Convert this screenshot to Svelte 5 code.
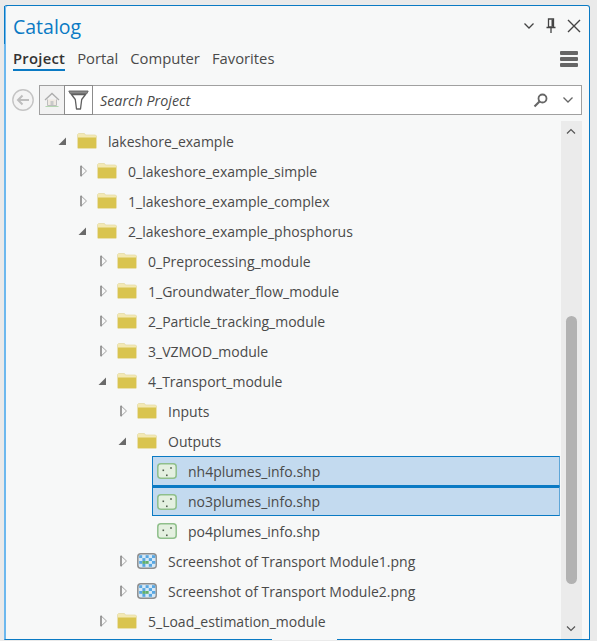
<script lang="ts">
type Row = { label: string; depth: number; kind: "folder" | "shape" | "raster"; arrow?: "open" | "closed"; selected?: boolean };

const rows: Row[] = [
  { label: "lakeshore_example", depth: 0, kind: "folder", arrow: "open" },
  { label: "0_lakeshore_example_simple", depth: 1, kind: "folder", arrow: "closed" },
  { label: "1_lakeshore_example_complex", depth: 1, kind: "folder", arrow: "closed" },
  { label: "2_lakeshore_example_phosphorus", depth: 1, kind: "folder", arrow: "open" },
  { label: "0_Preprocessing_module", depth: 2, kind: "folder", arrow: "closed" },
  { label: "1_Groundwater_flow_module", depth: 2, kind: "folder", arrow: "closed" },
  { label: "2_Particle_tracking_module", depth: 2, kind: "folder", arrow: "closed" },
  { label: "3_VZMOD_module", depth: 2, kind: "folder", arrow: "closed" },
  { label: "4_Transport_module", depth: 2, kind: "folder", arrow: "open" },
  { label: "Inputs", depth: 3, kind: "folder", arrow: "closed" },
  { label: "Outputs", depth: 3, kind: "folder", arrow: "open" },
  { label: "nh4plumes_info.shp", depth: 4, kind: "shape", selected: true },
  { label: "no3plumes_info.shp", depth: 4, kind: "shape", selected: true },
  { label: "po4plumes_info.shp", depth: 4, kind: "shape" },
  { label: "Screenshot of Transport Module1.png", depth: 3, kind: "raster", arrow: "closed" },
  { label: "Screenshot of Transport Module2.png", depth: 3, kind: "raster", arrow: "closed" },
  { label: "5_Load_estimation_module", depth: 2, kind: "folder", arrow: "closed" },
];

const tabs = ["Project", "Portal", "Computer", "Favorites"];

// 5x4 checker for the raster thumbnail
const rasterCells = Array.from({ length: 20 }, (_, i) => ({
  x: 2.2 + (i % 5) * 3.2,
  y: 2.2 + Math.floor(i / 5) * 2.9,
  fill: i === 11 || i === 12 ? "#62b06c" : (i % 5 + Math.floor(i / 5)) % 2 ? "#d6e8f6" : "#58a7e2",
}));
</script>

<div class="page">
  <div class="panel">
    <div class="titlebar">
      <span class="title">Catalog</span>
      <div class="window-btns">
        <svg width="12" height="8" viewBox="0 0 12 8"><path d="M1.5 1.5 6 6l4.500-4.500" fill="none" stroke="#444" stroke-width="1.300" /></svg>
        <svg width="12" height="16" viewBox="0 0 12 16"><path d="M3.500 1h5v8h-5zM1.500 9.500h9M6 10v5" fill="none" stroke="#444" stroke-width="1.300" /><path d="M6.500 1.500h2v7h-2z" fill="#444" /></svg>
        <svg width="14" height="14" viewBox="0 0 14 14"><path d="M1 1l12 12M13 1 1 13" fill="none" stroke="#444" stroke-width="1.400" /></svg>
      </div>
    </div>

    <div class="tabbar">
      <div class="tabs">
        {#each tabs as tab, i}
          <span class="tab" class:active={i === 0}>{tab}</span>
        {/each}
      </div>
      <div class="menu"><i></i><i></i><i></i></div>
    </div>

    <div class="searchbar">
      <svg class="back" width="24" height="24" viewBox="0 0 24 24">
        <circle cx="12" cy="12" r="10.200" fill="#f4f4f4" stroke="#c4c4c4" stroke-width="1.400" />
        <path d="M18 12H7M11.500 7.500 7 12l4.500 4.500" fill="none" stroke="#bdbdbd" stroke-width="2" />
      </svg>
      <div class="search">
        <div class="home">
          <svg width="16" height="16" viewBox="0 0 16 16">
            <path d="M1 8 8 1.500 15 8" fill="none" stroke="#adadad" stroke-width="1.300" />
            <path d="M3.500 7.500V13.500h9V7.500" fill="#efe9e2" stroke="#bdbdbd" />
            <path d="M6.500 9h3v4h-3z" fill="#c9c9c9" />
            <path d="M1.500 14.500h13" stroke="#b5d6b1" />
          </svg>
        </div>
        <div class="filter">
          <svg width="21" height="20" viewBox="0 0 21 20">
            <path d="M.8 1h19.400l-1.600 3H2.400z" fill="#8a8a8a" stroke="#5f5f5f" stroke-width=".9" />
            <path d="M3.500 4.500h14l-3.800 5L12.500 19h-4L7.300 9.500z" fill="#fff" stroke="#5f5f5f" stroke-width="1.300" stroke-linejoin="round" />
          </svg>
        </div>
        <span class="placeholder">Search Project</span>
        <svg class="glass" width="15" height="15" viewBox="0 0 15 15">
          <circle cx="9.500" cy="5.500" r="4" fill="none" stroke="#666" stroke-width="1.800" />
          <path d="M6.500 8.500 1.500 13.500" stroke="#666" stroke-width="2.200" />
        </svg>
        <svg class="drop" width="12" height="8" viewBox="0 0 12 8"><path d="M1.500 1.500 6 6l4.500-4.500" fill="none" stroke="#666" stroke-width="1.300" /></svg>
      </div>
    </div>

    <div class="content">
      <div class="tree">
        {#each rows as row}
          <div class="row" class:selected={row.selected} style="padding-left: {row.depth * 20 + 52}px">
            <span class="arrow">
              {#if row.arrow === "open"}
                <svg width="10" height="10" viewBox="0 0 10 10"><path d="M9 1.500V9H1.500z" fill="#6a6a6a" /></svg>
              {:else if row.arrow === "closed"}
                <svg width="12" height="12" viewBox="0 0 12 12"><path d="M4 .8 9.500 6 4 11.200z" fill="#f8f9f9" stroke="#a2a2a2" stroke-width="1" /><path d="M4 .8V11.200" stroke="#7c7c7c" stroke-width="1.200" /></svg>
              {/if}
            </span>
            {#if row.kind === "folder"}
              <svg class="icon" width="20" height="16" viewBox="0 0 20 16">
                <path d="M.5 3V1.500l1-1h6l1 1.500H18.500l1 1V15l-.5.500H1L.5 15z" fill="#f3e9b5" stroke="#e6dca6" stroke-width=".8" />
                <path d="M1 4.500h18V15H1z" fill="#d9c44f" />
              </svg>
            {:else if row.kind === "shape"}
              <svg class="icon" width="20" height="16" viewBox="0 0 20 16">
                <rect x=".8" y=".8" width="18.400" height="14.400" rx="3" fill="#e4f0e0" stroke="#8fbf8b" stroke-width="1.500" />
                <rect x="5.500" y="6.500" width="1.600" height="1.600" fill="#4f5e4d" />
                <rect x="13.200" y="4.200" width="1.600" height="1.600" fill="#4f5e4d" />
                <rect x="9" y="11.500" width="1.600" height="1.600" fill="#4f5e4d" />
              </svg>
            {:else}
              <svg class="icon" width="20" height="16" viewBox="0 0 20 16">
                <rect x=".8" y=".8" width="18.400" height="14.400" rx="3" fill="#d6e8f6" stroke="#8e8e8e" stroke-width="1.500" />
                {#each rasterCells as c}
                  <rect x={c.x} y={c.y} width="3.200" height="2.900" fill={c.fill} />
                {/each}
              </svg>
            {/if}
            <span class="label">{row.label}</span>
          </div>
        {/each}
      </div>
      <div class="scrollbar">
        <svg class="up" width="10" height="7" viewBox="0 0 10 7"><path d="M1 5.500 5 1.500l4 4" fill="none" stroke="#555" stroke-width="1.200" /></svg>
        <div class="thumb"></div>
        <svg class="down" width="10" height="7" viewBox="0 0 10 7"><path d="M1 1.500 5 5.500l4-4" fill="none" stroke="#555" stroke-width="1.200" /></svg>
      </div>
    </div>
  </div>
</div>

<style>
  :global(body) {
    margin: 0;
    background: #eaeaea;
    font-family: "Open Sans", "Noto Sans", sans-serif;
  }

  .page {
    width: 597px;
    height: 641px;
    box-sizing: border-box;
    padding: 5px 7px 1px 4px;
    overflow: hidden;
  }

  .panel {
    position: relative;
    height: 100%;
    box-sizing: border-box;
    display: flex;
    flex-direction: column;
    background: #f7f8f8;
    border: 1px solid #0a7ac4;
    border-left-color: #6db8ee;
    box-shadow: inset 1px 0 0 #6db8ee;
    border-radius: 3px 3px 0 0;
  }

  .panel::before {
    content: "";
    position: absolute;
    left: -1px;
    top: 0;
    width: 1px;
    height: 38px;
    background: #0a7ac4;
  }

  /* gap in the bottom border */
  .panel::after {
    content: "";
    position: absolute;
    left: 267px;
    bottom: -1px;
    width: 65px;
    height: 1px;
    background: #f7f8f8;
  }

  .titlebar {
    height: 36px;
    flex: none;
    display: flex;
    align-items: center;
    justify-content: space-between;
    padding: 4px 9px 0 8px;
    box-sizing: border-box;
  }

  .title {
    font-size: 19.500px;
    margin-top: 1px;
    color: #0a7ac4;
  }

  .window-btns {
    display: flex;
    align-items: center;
    gap: 10px;
    margin-right: -1px;
  }

  .tabbar {
    height: 43px;
    flex: none;
    display: flex;
    justify-content: space-between;
    align-items: flex-start;
    padding: 5px 10px 0 8px;
    box-sizing: border-box;
  }

  .tabs {
    display: flex;
    gap: 12px;
  }

  .tab {
    font-size: 14.800px;
    line-height: 22px;
    height: 22px;
    color: #4a4a4a;
  }

  .tab.active {
    color: #333;
    font-weight: 600;
    letter-spacing: 0.25px;
    border-bottom: 2px solid #0a7ac4;
  }

  .menu {
    display: flex;
    flex-direction: column;
    gap: 2px;
    margin-top: 4px;
    margin-right: 1px;
  }

  .menu i {
    display: block;
    width: 18px;
    height: 4px;
    border-radius: 1px;
    background: #666;
  }

  .searchbar {
    height: 30px;
    flex: none;
    display: flex;
    align-items: center;
    padding: 0 7px 0 6px;
    gap: 4px;
  }

  .search {
    flex: 1;
    height: 30px;
    box-sizing: border-box;
    display: flex;
    align-items: center;
    border: 1px solid #a0a0a0;
    background: #fff;
  }

  .home {
    width: 24px;
    height: 28px;
    background: #f2f2f2;
    display: flex;
    align-items: center;
    justify-content: center;
  }

  .filter {
    width: 29px;
    height: 30px;
    margin: -1px 0;
    box-sizing: border-box;
    border: 1px solid #8c8c8c;
    display: flex;
    align-items: center;
    justify-content: center;
  }

  .placeholder {
    flex: 1;
    padding-left: 7px;
    font-size: 14.300px;
    font-style: italic;
    color: #4a4a4a;
  }

  .glass {
    margin-right: 14px;
  }

  .drop {
    margin-right: 7px;
  }

  .content {
    flex: 1;
    min-height: 0;
    display: flex;
    padding: 6px 7px 0 0;
    justify-content: space-between;
  }

  .tree {
    flex: 1;
    padding-top: 5px;
    margin-right: 1px;
    overflow: hidden;
  }

  .row {
    height: 30px;
    box-sizing: border-box;
    display: flex;
    align-items: center;
    font-size: 14px;
    color: #4a4a4a;
    white-space: nowrap;
  }

  .row.selected {
    background: #c3daef;
    border: 1px solid #0a7ac4;
    border-right-color: #5ea6d8;
    height: 30px;
    margin-left: 147px;
    padding-left: 4px !important;
  }

  .row.selected + .row.selected {
    border-top-width: 2px;
  }

  .arrow {
    width: 20px;
    flex: none;
    display: flex;
    align-items: center;
    justify-content: flex-start;
  }

  .row.selected .arrow {
    width: 0;
  }

  .icon {
    flex: none;
    margin-right: 11px;
  }

  .scrollbar {
    width: 21px;
    flex: none;
    background: #ebebeb;
    position: relative;
  }

  .up,
  .down {
    position: absolute;
    left: 5px;
  }

  .up {
    top: 7px;
  }

  .down {
    bottom: 7px;
  }

  .thumb {
    position: absolute;
    left: 5px;
    top: 195px;
    width: 11px;
    height: 268px;
    border-radius: 6px;
    background: #b2b2b2;
  }
</style>
